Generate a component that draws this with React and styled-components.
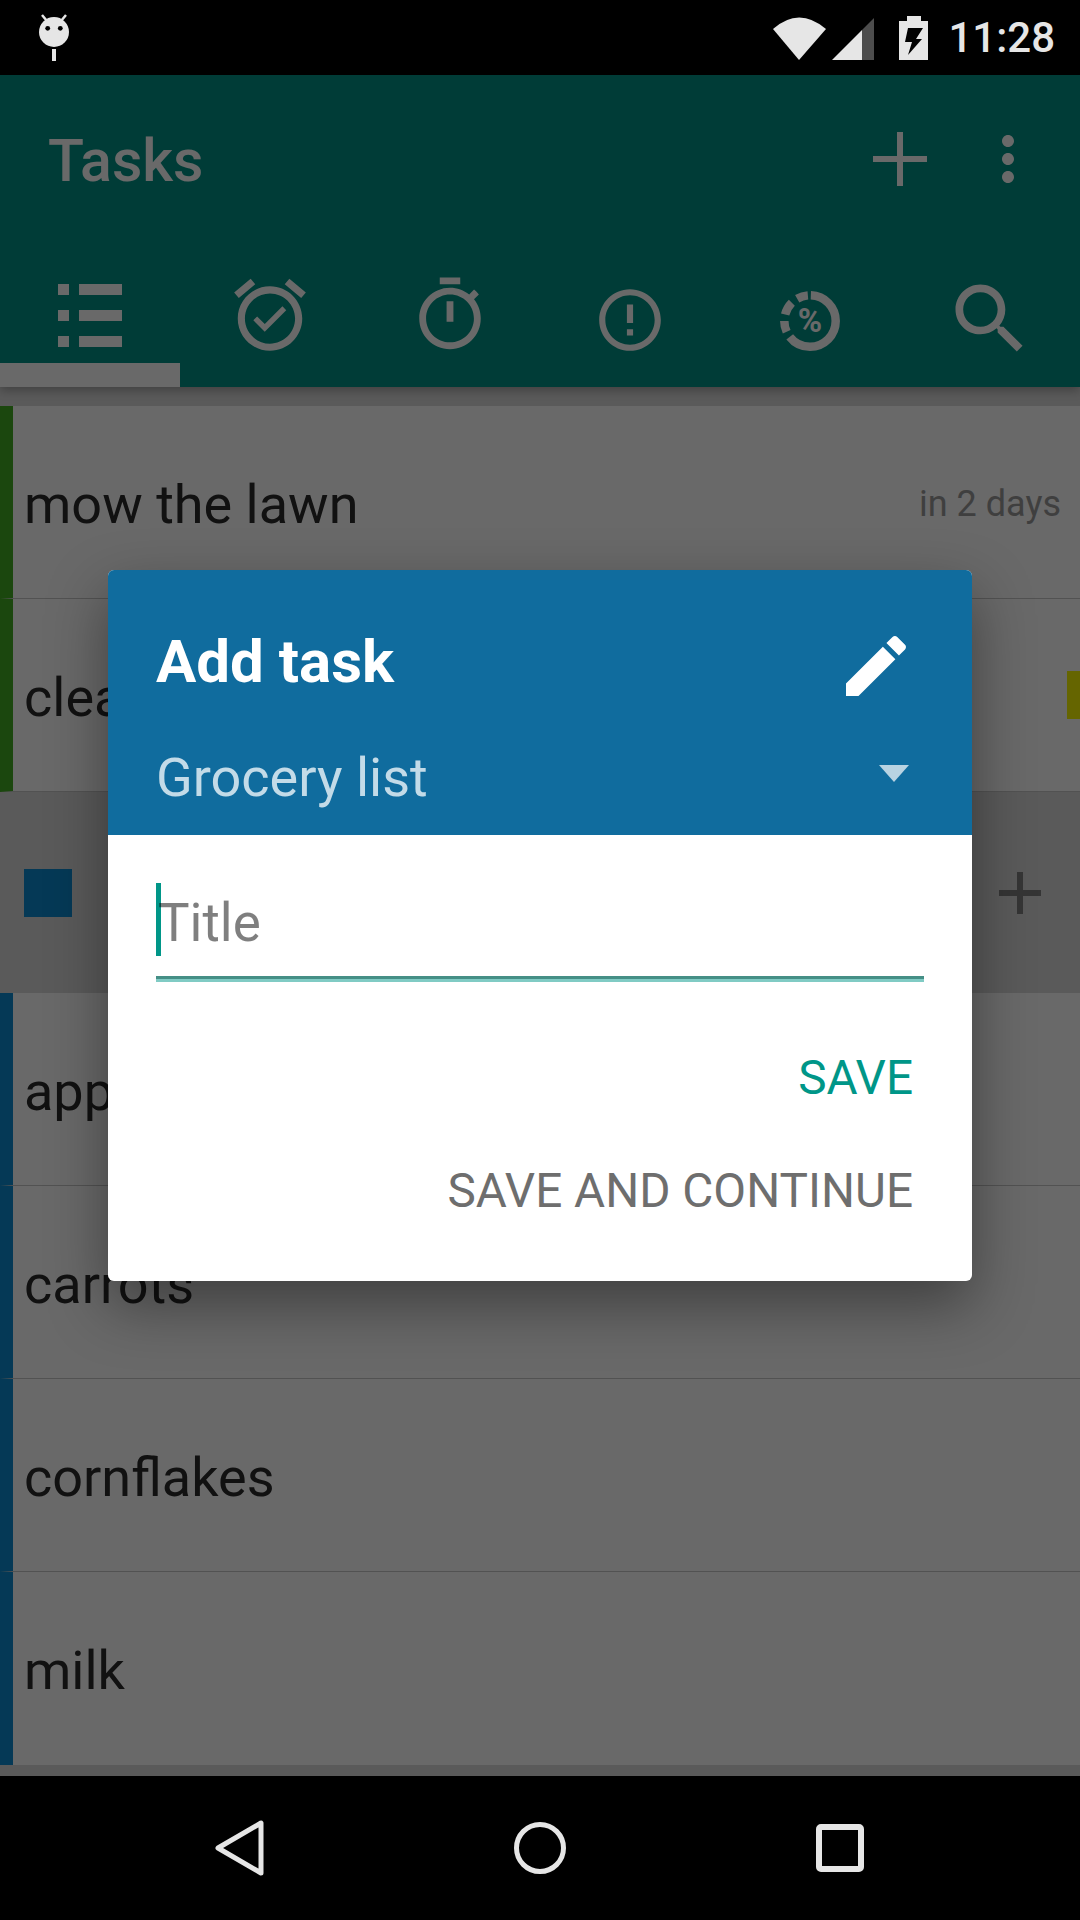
import React from 'react'
import styled, { createGlobalStyle } from 'styled-components'

const GlobalStyle = createGlobalStyle`
    html, body {
        margin: 0;
        padding: 0;
        background: #000;
        font-family: "Roboto", "Liberation Sans", sans-serif;
    }
`;

const Screen = styled.div`
    width: 1080px;
    height: 1920px;
    display: flex;
    flex-direction: column;
    overflow: hidden;
`;

const StatusBar = styled.div`
    height: 75px;
    flex: none;
    background: #000;
    color: #e6e6e6;
    display: flex;
    align-items: center;
    padding: 0 25px 0 39px;
    box-sizing: border-box;
`;

const StatusIcons = styled.svg`
    margin-left: auto;
    margin-right: 20px;
`;

const Clock = styled.span`
    font-size: 42px;
    font-weight: 500;
    line-height: 1;
`;

const Main = styled.div`
    position: relative;
    flex: 1;
    display: flex;
    flex-direction: column;
    background: #dadada;
    overflow: hidden;
`;

const AppBar = styled.header`
    position: relative;
    z-index: 1;
    flex: none;
    background: #009285;
    color: #fff;
    box-shadow: 0 3px 10px rgba(0, 0, 0, 0.3);
`;

const TitleRow = styled.div`
    height: 168px;
    box-sizing: border-box;
    display: flex;
    align-items: center;
    padding: 0 36px 0 48px;
`;

const AppTitle = styled.h1`
    margin: 2px auto 0 0;
    font-size: 59px;
    font-weight: 500;
`;

const ActionIcon = styled.svg`
    display: block;
    margin-left: ${p => p.$gap || 0}px;
    fill: currentColor;
`;

const Tabs = styled.div`
    height: 144px;
    display: grid;
    grid-template-columns: repeat(6, 180px);
`;

const Tab = styled.div`
    position: relative;
    display: flex;
    align-items: center;
    justify-content: center;

    ${p => p.$active && `
        &::after {
            content: "";
            position: absolute;
            left: 0;
            right: 0;
            bottom: 0;
            height: 24px;
            background: #fff;
        }
    `}
`;

const TabIcon = styled.svg`
    display: block;
    fill: #fff;
    margin-top: ${p => p.$shift || 0}px;
`;

const List = styled.div`
    flex: 1;
    padding-top: 19px;
    display: flex;
    flex-direction: column;
`;

const Row = styled.div`
    height: 193px;
    flex: none;
    box-sizing: border-box;
    display: flex;
    align-items: center;
    background: #fff;
    border-left: 13px solid ${p => p.$color};
    border-bottom: ${p => p.$last ? 'none' : '1px solid #c8c8c8'};
    padding: 4px 0 0 11px;
`;

const RowText = styled.span`
    font-size: 54px;
    color: #2a2a2a;
`;

const RowDate = styled.span`
    margin-left: auto;
    margin-right: 19px;
    font-size: 36px;
    color: #9a9a9a;
`;

const PriorityTag = styled.span`
    margin: 0 0 5px auto;
    width: 13px;
    height: 48px;
    background: #f4f400;
`;

const SectionHeader = styled.div`
    height: 201px;
    flex: none;
    display: flex;
    align-items: center;
    padding: 0 39px 0 24px;
`;

const SectionSwatch = styled.span`
    width: 48px;
    height: 48px;
    background: #0e8cd0;
`;

const SectionAdd = styled.svg`
    display: block;
    margin-left: auto;
    fill: #808080;
`;

const Scrim = styled.div`
    position: absolute;
    inset: 0;
    z-index: 2;
    background: rgba(0, 0, 0, 0.59);
    display: flex;
    align-items: center;
    justify-content: center;
`;

const Dialog = styled.div`
    width: 864px;
    height: 711px;
    background: #fff;
    border-radius: 6px;
    overflow: hidden;
    box-shadow: 0 24px 60px rgba(0, 0, 0, 0.4);
    display: flex;
    flex-direction: column;
`;

const DialogHead = styled.div`
    height: 265px;
    flex: none;
    box-sizing: border-box;
    background: #106c9e;
    padding: 0 48px;
    color: #fff;
`;

const HeadRow = styled.div`
    display: flex;
    align-items: center;
    justify-content: space-between;
    height: ${p => p.$height}px;
`;

const DialogTitle = styled.h2`
    margin: 0 0 8px;
    font-size: 60px;
    font-weight: 700;
`;

const EditIcon = styled.svg`
    display: block;
    margin: 2px 8px 0 0;
    fill: #fff;
`;

const ListName = styled.span`
    font-size: 54px;
    color: #c3dbe8;
`;

const Caret = styled.span`
    width: 0;
    height: 0;
    margin: 0 15px 8px 0;
    border-left: 15px solid transparent;
    border-right: 15px solid transparent;
    border-top: 17px solid #b8d3e2;
`;

const DialogBody = styled.div`
    flex: 1;
    padding: 48px 48px 0;
`;

const Field = styled.div`
    height: 96px;
    border-bottom: 3px solid #80cbc4;
    box-shadow: inset 0 -3px 0 #458f86;
    display: flex;
    align-items: flex-start;
`;

const Cursor = styled.span`
    width: 5px;
    height: 73px;
    background: #009688;
    flex: none;
`;

const Placeholder = styled.span`
    margin-left: -3px;
    font-size: 53px;
    line-height: 80px;
    color: rgba(0, 0, 0, 0.5);
`;

const Actions = styled.div`
    display: flex;
    flex-direction: column;
    align-items: flex-end;
    padding: 68px 11px 0 0;
    gap: 57px;
`;

const ActionButton = styled.span`
    font-size: 47.7px;
    line-height: 56px;
    color: ${p => p.$primary ? '#009688' : '#6e6e6e'};
`;

const NavBar = styled.nav`
    height: 144px;
    flex: none;
    background: #000;
    display: grid;
    grid-template-columns: 264px 552px 264px;
`;

const NavSlot = styled.div`
    display: flex;
    align-items: center;
    justify-content: ${p => p.$justify};
`;

const NavIcon = styled.svg`
    display: block;
    fill: none;
    stroke: #e6e6e6;
`;

const tasks = [
    { text: 'mow the lawn', date: 'in 2 days', color: '#42ad22' },
    { text: 'clean the house', tag: true, color: '#42ad22' },
]
const groceries = ['apples', 'carrots', 'cornflakes', 'milk']

function DebugIcon() {
    return (
        <svg width="30" height="48" viewBox="39 15 30 48">
            <path d="M42 16 L47 22 M66 16 L61 22" stroke="#e6e6e6" strokeWidth="2.5" />
            <circle cx="54" cy="33" r="15" fill="#e6e6e6" />
            <circle cx="47.7" cy="29.3" r="2.4" fill="#000" />
            <circle cx="60.3" cy="29.3" r="2.4" fill="#000" />
            <rect x="52" y="50" width="4" height="12" fill="#e6e6e6" />
        </svg>
    )
}

function PercentIcon() {
    return (
        <TabIcon width="60" height="60" viewBox="0 0 60 60" $shift={11}>
            <g fill="none" stroke="#fff" strokeWidth="8.5" transform="rotate(-90 30 30)">
                <circle cx="30" cy="30" r="25.7" pathLength="360" strokeDasharray="230 360" strokeDashoffset="-2" />
                <circle cx="30" cy="30" r="25.7" pathLength="360" strokeDasharray="25 360" strokeDashoffset="-245" />
                <circle cx="30" cy="30" r="25.7" pathLength="360" strokeDasharray="30 360" strokeDashoffset="-285" />
                <circle cx="30" cy="30" r="25.7" pathLength="360" strokeDasharray="25 360" strokeDashoffset="-330" />
            </g>
            <text x="30" y="41" textAnchor="middle" fontSize="33" fontWeight="700" fontFamily="Roboto, sans-serif" fill="#fff">%</text>
        </TabIcon>
    )
}

export default function App() {
    return (
        <Screen>
            <GlobalStyle />
            <StatusBar>
                <DebugIcon />
                <StatusIcons width="155" height="44" viewBox="773 15 155 44">
                    <path d="M799 59 L773 28 Q799 5 826 28 Z" fill="#e6e6e6" />
                    <path d="M832 59 L862 29 V59 Z" fill="#e6e6e6" />
                    <path d="M862 29 L874 17 V59 H862 Z" fill="#4d4d4d" />
                    <path d="M907 15 H921 V20 H928 V59 H899 V20 H907 Z" fill="#e6e6e6" />
                    <path d="M908 27 H923 L916 38 H922 L908 54 L912 41 H905 Z" fill="#000" />
                </StatusIcons>
                <Clock>11:28</Clock>
            </StatusBar>

            <Main>
                <AppBar>
                    <TitleRow>
                        <AppTitle>Tasks</AppTitle>
                        <ActionIcon width="54" height="54" viewBox="0 0 54 54">
                            <path d="M24 0 H30 V24 H54 V30 H30 V54 H24 V30 H0 V24 H24 Z" />
                        </ActionIcon>
                        <ActionIcon width="72" height="72" viewBox="0 0 24 24" $gap={45}>
                            <path d="M12 8c1.1 0 2-.9 2-2s-.9-2-2-2-2 .9-2 2 .9 2 2 2zm0 2c-1.1 0-2 .9-2 2s.9 2 2 2 2-.9 2-2-.9-2-2-2zm0 6c-1.1 0-2 .9-2 2s.9 2 2 2 2-.9 2-2-.9-2-2-2z" />
                        </ActionIcon>
                    </TitleRow>
                    <Tabs>
                        <Tab $active>
                            <TabIcon width="64" height="63" viewBox="58 284 64 63">
                                <path d="M58 284h11v11H58zM79 284h43v11H79zM58 310h11v11H58zM79 310h43v11H79zM58 336h11v11H58zM79 336h43v11H79z" />
                            </TabIcon>
                        </Tab>
                        <Tab>
                            <TabIcon width="86" height="86" viewBox="0 0 24 24">
                                <path d="M22 5.72l-4.6-3.86-1.29 1.53 4.6 3.86L22 5.72zM7.88 3.39L6.6 1.86 2 5.71l1.29 1.53 4.59-3.85zM12 4c-4.97 0-9 4.03-9 9s4.02 9 9 9c4.97 0 9-4.03 9-9s-4.03-9-9-9zm0 16c-3.86 0-7-3.14-7-7s3.14-7 7-7 7 3.14 7 7-3.14 7-7 7zm-1.46-5.47L8.41 12.4l-1.06 1.06 3.18 3.18 6-6-1.06-1.06-4.93 4.95z" />
                            </TabIcon>
                        </Tab>
                        <Tab>
                            <TabIcon width="82" height="82" viewBox="0 0 24 24">
                                <path d="M15 1H9v2h6V1zm-4 13h2V8h-2v6zm8.03-6.61l1.42-1.42c-.43-.51-.9-.99-1.41-1.41l-1.42 1.42C16.07 4.74 14.12 4 12 4c-4.97 0-9 4.03-9 9s4.02 9 9 9 9-4.03 9-9c0-2.12-.74-4.07-1.97-5.61zM12 20c-3.87 0-7-3.13-7-7s3.13-7 7-7 7 3.13 7 7-3.13 7-7 7z" />
                            </TabIcon>
                        </Tab>
                        <Tab>
                            <TabIcon width="74" height="74" viewBox="0 0 24 24" $shift={10}>
                                <path d="M11 15h2v2h-2zm0-8h2v6h-2zm.99-5C6.47 2 2 6.48 2 12s4.47 10 9.99 10C17.52 22 22 17.52 22 12S17.52 2 11.99 2zM12 20c-4.42 0-8-3.58-8-8s3.58-8 8-8 8 3.58 8 8-3.58 8-8 8z" />
                            </TabIcon>
                        </Tab>
                        <Tab>
                            <PercentIcon />
                        </Tab>
                        <Tab>
                            <TabIcon width="92" height="92" viewBox="0 0 24 24" $shift={7}>
                                <path d="M15.5 14h-.79l-.28-.27C15.41 12.59 16 11.11 16 9.5 16 5.91 13.09 3 9.5 3S3 5.91 3 9.5 5.91 16 9.5 16c1.61 0 3.09-.59 4.23-1.57l.27.28v.79l5 4.99L20.49 19l-4.99-5zm-6 0C7.01 14 5 11.99 5 9.5S7.01 5 9.5 5 14 7.01 14 9.5 11.99 14 9.5 14z" />
                            </TabIcon>
                        </Tab>
                    </Tabs>
                </AppBar>

                <List>
                    {tasks.map(t => (
                        <Row key={t.text} $color={t.color}>
                            <RowText>{t.text}</RowText>
                            {t.date && <RowDate>{t.date}</RowDate>}
                            {t.tag && <PriorityTag />}
                        </Row>
                    ))}
                    <SectionHeader>
                        <SectionSwatch />
                        <SectionAdd width="42" height="42" viewBox="0 0 42 42">
                            <path d="M18 0 H24 V18 H42 V24 H24 V42 H18 V24 H0 V18 H18 Z" />
                        </SectionAdd>
                    </SectionHeader>
                    {groceries.map((g, i) => (
                        <Row key={g} $color="#0e8cd0" $last={i === groceries.length - 1}>
                            <RowText>{g}</RowText>
                        </Row>
                    ))}
                </List>

                <Scrim>
                    <Dialog>
                        <DialogHead>
                            <HeadRow $height={190}>
                                <DialogTitle>Add task</DialogTitle>
                                <EditIcon width="80" height="80" viewBox="0 0 24 24">
                                    <path d="M3 17.25V21h3.75L17.81 9.94l-3.75-3.75L3 17.25zM20.71 7.04c.39-.39.39-1.02 0-1.41l-2.34-2.34c-.39-.39-1.02-.39-1.41 0l-1.83 1.83 3.75 3.75 1.83-1.83z" />
                                </EditIcon>
                            </HeadRow>
                            <HeadRow $height={34}>
                                <ListName>Grocery list</ListName>
                                <Caret />
                            </HeadRow>
                        </DialogHead>
                        <DialogBody>
                            <Field>
                                <Cursor />
                                <Placeholder>Title</Placeholder>
                            </Field>
                            <Actions>
                                <ActionButton $primary>SAVE</ActionButton>
                                <ActionButton>SAVE AND CONTINUE</ActionButton>
                            </Actions>
                        </DialogBody>
                    </Dialog>
                </Scrim>
            </Main>

            <NavBar>
                <NavSlot $justify="flex-end">
                    <NavIcon width="49" height="56" viewBox="0 0 49 56">
                        <path d="M46 3 V53 L3 28 Z" strokeWidth="5" strokeLinejoin="round" />
                    </NavIcon>
                </NavSlot>
                <NavSlot $justify="center">
                    <NavIcon width="52" height="52" viewBox="0 0 52 52">
                        <circle cx="26" cy="26" r="23.5" strokeWidth="5" />
                    </NavIcon>
                </NavSlot>
                <NavSlot $justify="flex-start">
                    <NavIcon width="48" height="48" viewBox="0 0 48 48">
                        <rect x="3" y="3" width="42" height="42" rx="2" strokeWidth="6" />
                    </NavIcon>
                </NavSlot>
            </NavBar>
        </Screen>
    )
}
